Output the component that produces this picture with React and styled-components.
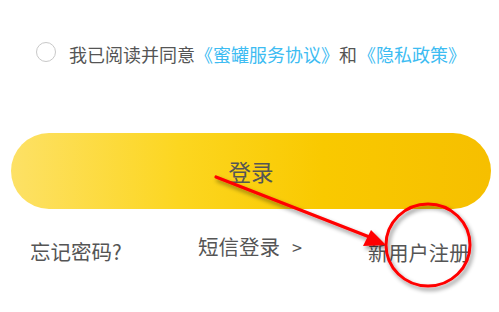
import React from 'react'
import styled, { createGlobalStyle } from 'styled-components'

const Global = createGlobalStyle`
  html, body {
    margin: 0;
    padding: 0;
    background: #fff;
  }
  body {
    font-family: "Noto Sans CJK SC", "Noto Sans", sans-serif;
  }
`

const Page = styled.div`
  position: relative;
  width: 499px;
  height: 312px;
  overflow: hidden;
  background: #fff;
`

const AgreeRow = styled.div`
  display: flex;
  align-items: center;
  padding: 42px 0 0 36px;
  height: 20px;
`

const Radio = styled.span`
  box-sizing: border-box;
  width: 20px;
  height: 20px;
  border-radius: 50%;
  border: 1px solid #c8c8c8;
  flex-shrink: 0;
  margin-right: 13px;
`

const AgreeText = styled.span`
  font-size: 18px;
  line-height: 20px;
  color: #555;
  white-space: nowrap;
  position: relative;
  top: 2px;
`

const Link = styled.span`
  color: #3dbcf2;
  margin: 0 ${p => p.$gap || 0}px;
`

const LoginButton = styled.button`
  display: flex;
  align-items: center;
  justify-content: center;
  box-sizing: border-box;
  margin: 71px 0 0 11px;
  width: 480px;
  height: 76px;
  border: none;
  border-radius: 38px;
  background: linear-gradient(90deg, #fde166 0%, #fcd620 35%, #f9c900 65%, #f6bf00 100%);
  font-family: inherit;
  font-size: 22.5px;
  color: #555;
  padding: 0;
`

const LinksRow = styled.div`
  display: grid;
  grid-template-columns: 168px 170px auto;
  padding: 25px 0 0 30px;
  align-items: start;
`

const LinkItem = styled.span`
  font-size: ${p => p.$size || 20}px;
  line-height: 28px;
  color: #555;
  white-space: nowrap;
  margin-top: ${p => p.$offset || 0}px;
`

const Chevron = styled.span`
  margin-left: 12px;
  font-size: 18px;
`

const Overlay = styled.svg`
  position: absolute;
  left: 0;
  top: 0;
  pointer-events: none;
`

export default function App() {
  return (
    <Page>
      <Global />
      <AgreeRow>
        <Radio />
        <AgreeText>
          我已阅读并同意<Link>《蜜罐服务协议》</Link>和<Link $gap={1}>《隐私政策》</Link>
        </AgreeText>
      </AgreeRow>
      <LoginButton>登录</LoginButton>
      <LinksRow>
        <LinkItem $size={20.5} $offset={3}>忘记密码?</LinkItem>
        <LinkItem $size={20.5} $offset={-2}>短信登录<Chevron>&gt;</Chevron></LinkItem>
        <LinkItem $size={20.3} $offset={4}>新用户注册</LinkItem>
      </LinksRow>
      <Overlay width="499" height="312" viewBox="0 0 499 312">
        <defs>
          <filter id="sh" x="-20%" y="-20%" width="140%" height="140%">
            <feDropShadow dx="2" dy="3" stdDeviation="2" floodColor="#000" floodOpacity="0.45" />
          </filter>
        </defs>
        <g filter="url(#sh)">
          <line x1="216" y1="177" x2="372" y2="238" stroke="#f00" strokeWidth="3.2" strokeLinecap="round" />
          <polygon points="386,245 371,230 363,246" fill="#f00" />
          <ellipse cx="428" cy="245" rx="42" ry="41" fill="none" stroke="#f00" strokeWidth="3" />
        </g>
      </Overlay>
    </Page>
  )
}
